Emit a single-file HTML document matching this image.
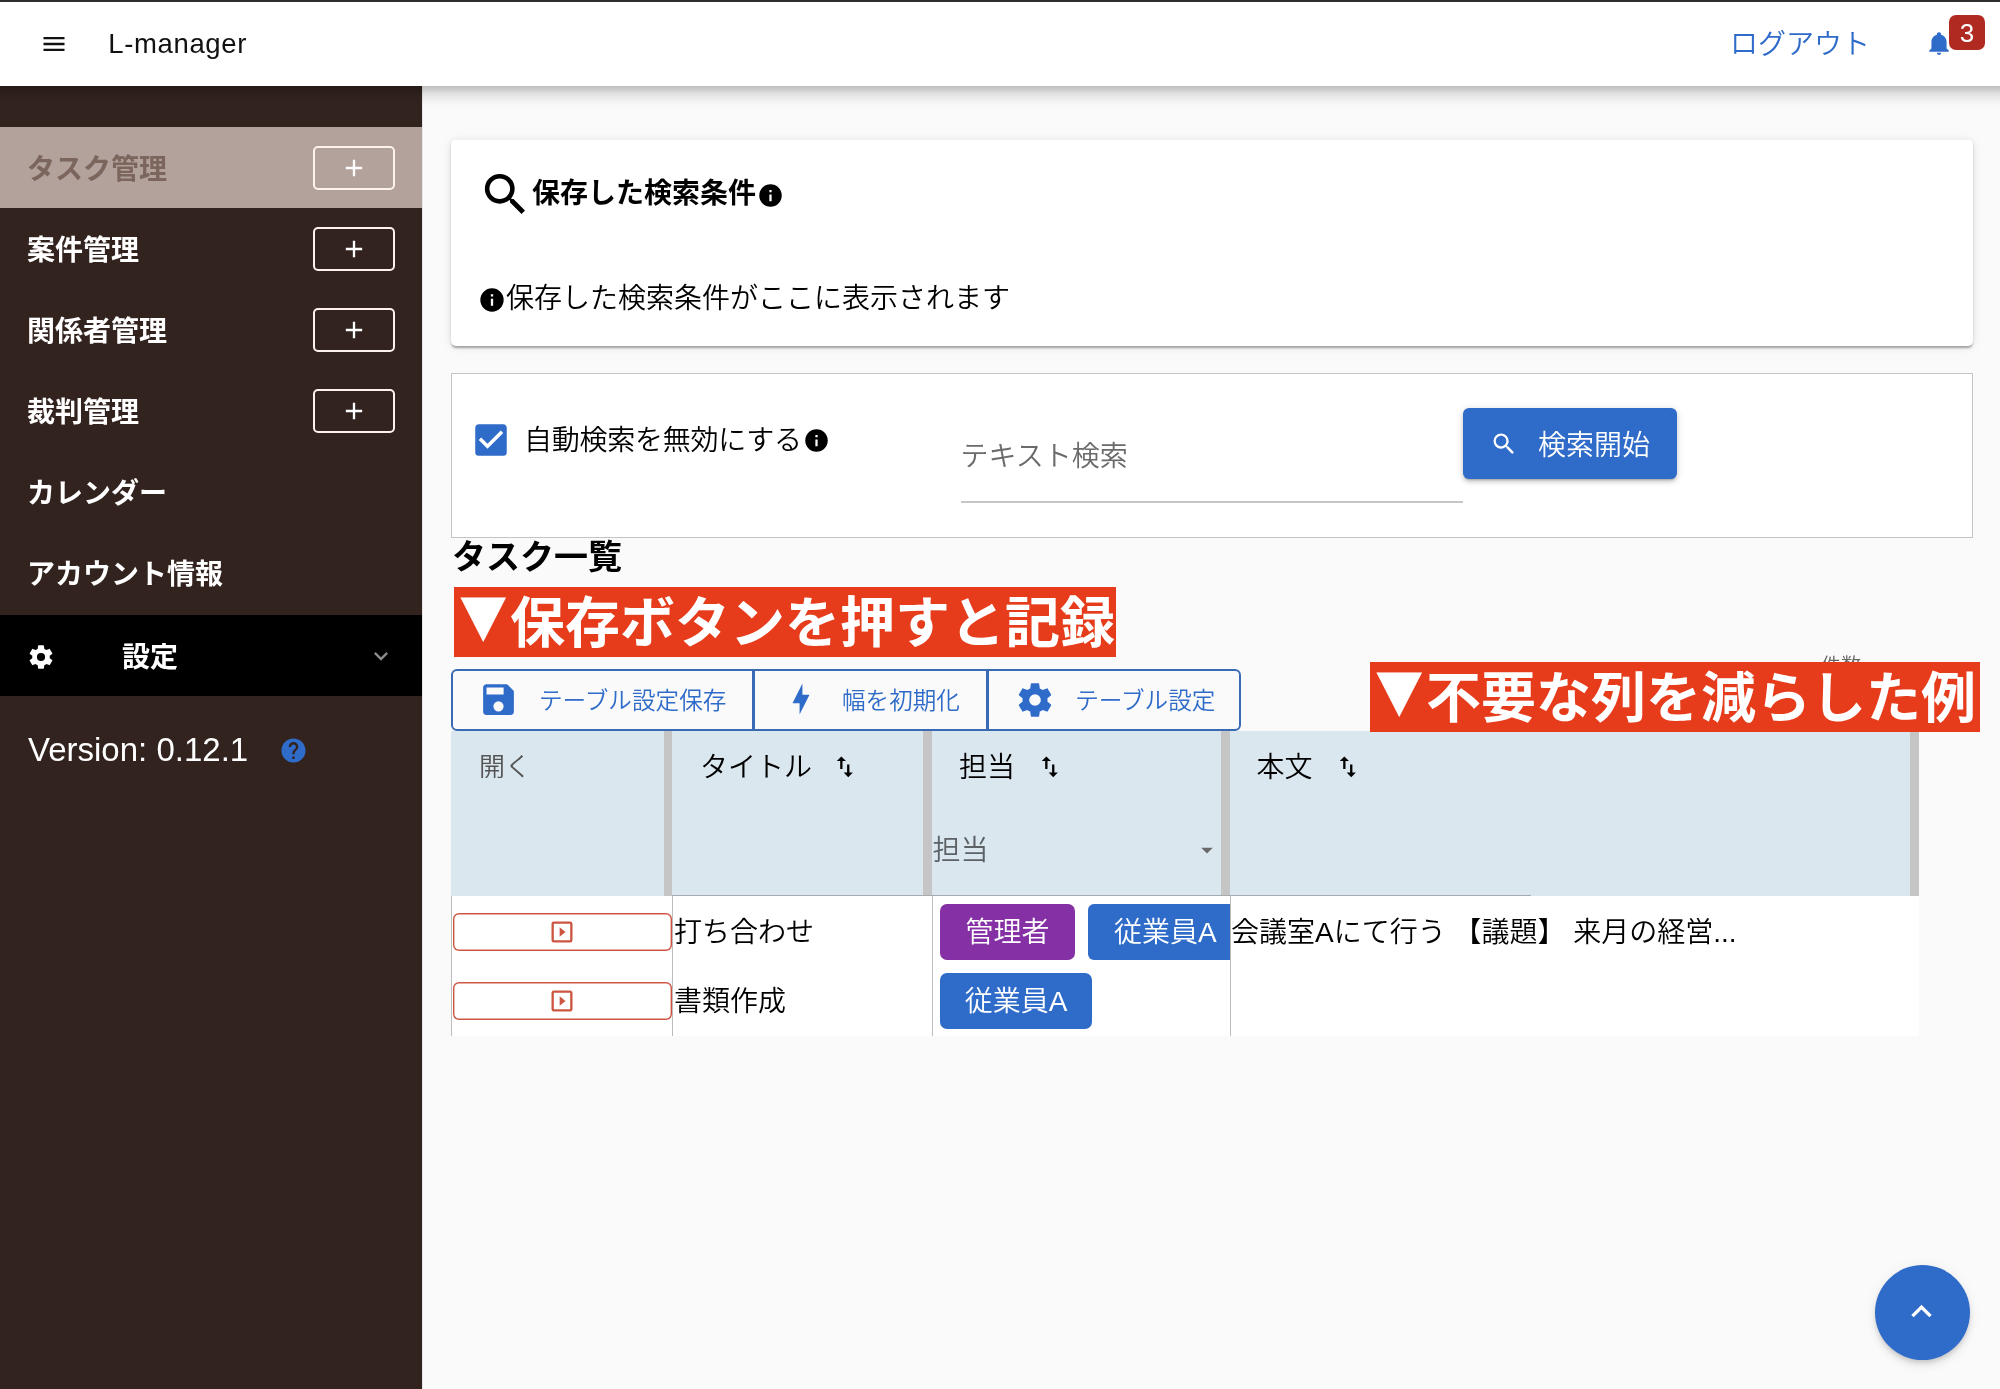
<!DOCTYPE html>
<html lang="ja">
<head>
<meta charset="utf-8">
<title>L-manager</title>
<style>
*{box-sizing:border-box;margin:0;padding:0}
html,body{width:2000px;height:1389px;overflow:hidden}
body{will-change:transform;background:#fafafa;font-family:"Liberation Sans","Noto Sans CJK JP DemiLight","Noto Sans CJK JP",sans-serif;font-size:28px;color:#000;position:relative}
.abs{position:absolute}
.t{position:absolute;white-space:nowrap;line-height:40px;height:40px}
svg{display:block;position:absolute}
/* header */
#topline{left:0;top:0;width:2000px;height:2px;background:#2e2e2e}
#header{left:0;top:1px;width:2000px;height:85px;background:#fff;z-index:5}
#hshadow{left:0;top:86px;width:2000px;height:24px;z-index:5;background:linear-gradient(to bottom,rgba(0,0,0,.24) 0,rgba(0,0,0,.17) 4px,rgba(0,0,0,.096) 8px,rgba(0,0,0,.04) 14px,rgba(0,0,0,.012) 18px,rgba(0,0,0,0) 23px)}
/* sidebar */
#side{left:0;top:86px;width:422px;height:1303px;background:#32231f;z-index:3}
.nav{position:absolute;left:0;width:422px;height:81px;color:#fff;font-weight:700;font-family:"Liberation Sans","Noto Sans CJK JP",sans-serif}
.nav .lbl{position:absolute;left:27px;top:21.5px;line-height:42px;white-space:nowrap;font-size:28px}
.plus{position:absolute;left:313px;top:19px;width:82px;height:44px;border:2px solid #fdf3ec;border-radius:5px}
.plus svg{left:25px;top:6px}
/* cards */
#card1{left:451px;top:140px;width:1522px;height:206px;background:#fff;border-radius:5px;box-shadow:0 3px 2px -1px rgba(0,0,0,.2),0 2px 3px rgba(0,0,0,.14),0 1px 8px rgba(0,0,0,.12)}
#card2{left:451px;top:373px;width:1522px;height:165px;background:#fff;border:1px solid #c4c4c4}

.banner{background:#e63c1b;color:#fff;font-weight:700;font-size:55px;line-height:62.5px;padding-left:56px;white-space:nowrap;overflow:hidden;font-family:"Noto Sans CJK JP",sans-serif}
.gb{top:0;height:62px;border:2px solid #3a6ab4;background:transparent}
.gt{top:10px;color:#2f6bc8;font-size:23.6px}
.bar{top:731px;width:8.5px;height:165px;background:#c5c5c5}
.vline{top:896px;width:1px;height:140px;background:#bdbdbd}
.pbtn{left:453px;width:219px;height:38px;box-shadow:inset 0 0 0 1.4px #cd5641;border-radius:6px;background:#fff}
.chip{height:56px;border-radius:7px;color:#fff;text-align:center;line-height:58px;white-space:nowrap;overflow:hidden}
.tri{position:absolute;left:1.7px;top:-7.6px;width:55px;text-align:center;font-size:48.5px;line-height:70px;transform:scaleY(1.13)}
</style>
</head>
<body>
<div class="abs" id="header">
  <svg style="left:39.75px;top:29.4px" width="28" height="28" viewBox="0 0 24 24"><path fill="#111" d="M3,6H21V8H3V6M3,11H21V13H3V11M3,16H21V18H3V16Z"/></svg>
  <div class="t" id="brand" style="left:108.2px;top:23px;font-size:27.5px;letter-spacing:.65px;color:#111">L-manager</div>
  <div class="t" id="logout" style="left:1730px;top:24px;color:#2f6bc8">ログアウト</div>
  <svg style="left:1925.5px;top:29px" width="26" height="26" viewBox="0 0 24 24"><path fill="#2f6bc8" d="M21,19V20H3V19L5,17V11C5,7.9 7.03,5.17 10,4.29C10,4.19 10,4.1 10,4A2,2 0 0,1 12,2A2,2 0 0,1 14,4C14,4.1 14,4.19 14,4.29C16.97,5.17 19,7.9 19,11V17L21,19M14,21A2,2 0 0,1 12,23A2,2 0 0,1 10,21"/></svg>
  <div class="abs" id="badge" style="left:1949px;top:14px;width:36px;height:35px;background:#b12a22;border-radius:7px;color:#fff;text-align:center;line-height:37px;font-size:26px">3</div>
</div>
<div class="abs" id="topline" style="z-index:6"></div>
<div class="abs" id="hshadow"></div>
<div class="abs" style="left:422px;top:86px;width:1px;height:1303px;background:#e4e6e7;z-index:2"></div>

<div class="abs" id="side">
  <div class="nav" style="top:41px;background:#b2a29b;color:#7b655d"><span class="lbl">タスク管理</span><div class="plus"><svg width="28" height="28" viewBox="0 0 24 24"><path fill="#fff" d="M19,13H13V19H11V13H5V11H11V5H13V11H19V13Z"/></svg></div></div>
  <div class="nav" style="top:122px"><span class="lbl">案件管理</span><div class="plus"><svg width="28" height="28" viewBox="0 0 24 24"><path fill="#fff" d="M19,13H13V19H11V13H5V11H11V5H13V11H19V13Z"/></svg></div></div>
  <div class="nav" style="top:203px"><span class="lbl">関係者管理</span><div class="plus"><svg width="28" height="28" viewBox="0 0 24 24"><path fill="#fff" d="M19,13H13V19H11V13H5V11H11V5H13V11H19V13Z"/></svg></div></div>
  <div class="nav" style="top:284px"><span class="lbl">裁判管理</span><div class="plus"><svg width="28" height="28" viewBox="0 0 24 24"><path fill="#fff" d="M19,13H13V19H11V13H5V11H11V5H13V11H19V13Z"/></svg></div></div>
  <div class="nav" style="top:365px"><span class="lbl">カレンダー</span></div>
  <div class="nav" style="top:446px"><span class="lbl">アカウント情報</span></div>
  <div class="nav" style="top:529px;background:#000"><svg style="left:27px;top:28px" width="28" height="28" viewBox="0 0 24 24"><path fill="#fff" d="M12,15.5A3.5,3.5 0 0,1 8.5,12A3.5,3.5 0 0,1 12,8.5A3.5,3.5 0 0,1 15.5,12A3.5,3.5 0 0,1 12,15.5M19.43,12.97C19.47,12.65 19.5,12.33 19.5,12C19.5,11.67 19.47,11.34 19.43,11L21.54,9.37C21.73,9.22 21.78,8.95 21.66,8.73L19.66,5.27C19.54,5.05 19.27,4.96 19.05,5.05L16.56,6.05C16.04,5.66 15.5,5.32 14.87,5.07L14.5,2.42C14.46,2.18 14.25,2 14,2H10C9.75,2 9.54,2.18 9.5,2.42L9.13,5.07C8.5,5.32 7.96,5.66 7.44,6.05L4.95,5.05C4.73,4.96 4.46,5.05 4.34,5.27L2.34,8.73C2.21,8.95 2.27,9.22 2.46,9.37L4.57,11C4.53,11.34 4.5,11.67 4.5,12C4.5,12.33 4.53,12.65 4.57,12.97L2.46,14.63C2.27,14.78 2.21,15.05 2.34,15.27L4.34,18.73C4.46,18.95 4.73,19.03 4.95,18.95L7.44,17.94C7.96,18.34 8.5,18.68 9.13,18.93L9.5,21.58C9.54,21.82 9.75,22 10,22H14C14.25,22 14.46,21.82 14.5,21.58L14.87,18.93C15.5,18.67 16.04,18.34 16.56,17.94L19.05,18.95C19.27,19.03 19.54,18.95 19.66,18.73L21.66,15.27C21.78,15.05 21.73,14.78 21.54,14.63L19.43,12.97Z"/></svg><span class="lbl" style="left:122px">設定</span><svg style="left:367px;top:27px" width="28" height="28" viewBox="0 0 24 24"><path fill="#8a8a8a" d="M7.41,8.58L12,13.17L16.59,8.58L18,10L12,16L6,10L7.41,8.58Z"/></svg></div>
  <div class="t" id="ver" style="left:28px;top:644px;font-size:33px;color:#fff">Version: 0.12.1</div>
  <svg style="left:278.5px;top:649.5px" width="29" height="29" viewBox="0 0 24 24"><path fill="#2f6bc8" d="M15.07,11.25L14.17,12.17C13.45,12.89 13,13.5 13,15H11V14.5C11,13.39 11.45,12.39 12.17,11.67L13.41,10.41C13.78,10.05 14,9.55 14,9C14,7.89 13.1,7 12,7A2,2 0 0,0 10,9H8A4,4 0 0,1 12,5A4,4 0 0,1 16,9C16,9.88 15.64,10.67 15.07,11.25M13,19H11V17H13M12,2A10,10 0 0,0 2,12A10,10 0 0,0 12,22A10,10 0 0,0 22,12C22,6.47 17.5,2 12,2Z"/></svg>
</div>

<!-- MAIN -->
<div class="abs" id="card1"></div>
<div class="abs" id="card2"></div>

<svg style="left:478px;top:167px" width="55" height="55" viewBox="0 0 24 24"><path fill="#000" d="M9.5,3A6.5,6.5 0 0,1 16,9.5C16,11.11 15.41,12.59 14.44,13.73L14.71,14H15.5L20.5,19L19,20.5L14,15.5V14.71L13.73,14.44C12.59,15.41 11.11,16 9.5,16A6.5,6.5 0 0,1 3,9.5A6.5,6.5 0 0,1 9.5,3M9.5,5C7,5 5,7 5,9.5C5,12 7,14 9.5,14C12,14 14,12 14,9.5C14,7 12,5 9.5,5Z"/></svg>
<div class="t" id="c1title" style="left:532px;top:173.5px;font-weight:700;font-family:'Liberation Sans','Noto Sans CJK JP',sans-serif">保存した検索条件</div>
<svg style="left:756.5px;top:181.5px" width="27" height="27" viewBox="0 0 24 24"><path fill="#000" d="M13,9H11V7H13M13,17H11V11H13M12,2A10,10 0 0,0 2,12A10,10 0 0,0 12,22A10,10 0 0,0 22,12A10,10 0 0,0 12,2Z"/></svg>
<svg style="left:478.0px;top:285.5px" width="28" height="28" viewBox="0 0 24 24"><path fill="#000" d="M13,9H11V7H13M13,17H11V11H13M12,2A10,10 0 0,0 2,12A10,10 0 0,0 12,22A10,10 0 0,0 22,12A10,10 0 0,0 12,2Z"/></svg>
<div class="t" id="c1text" style="left:506px;top:278.5px">保存した検索条件がここに表示されます</div>

<svg style="left:470px;top:418.5px" width="42" height="42" viewBox="0 0 24 24"><path fill="#2f6bc8" d="M10,17L5,12L6.41,10.58L10,14.17L17.59,6.58L19,8M19,3H5C3.89,3 3,3.89 3,5V19A2,2 0 0,0 5,21H19A2,2 0 0,0 21,19V5C21,3.89 20.1,3 19,3Z"/></svg>
<div class="t" id="autolbl" style="left:524px;top:420.5px;letter-spacing:-.25px">自動検索を無効にする</div>
<svg style="left:803.0px;top:426.5px" width="27" height="27" viewBox="0 0 24 24"><path fill="#000" d="M13,9H11V7H13M13,17H11V11H13M12,2A10,10 0 0,0 2,12A10,10 0 0,0 12,22A10,10 0 0,0 22,12A10,10 0 0,0 12,2Z"/></svg>
<div class="t" id="txtsearch" style="left:960.5px;top:436.5px;color:#6b6b6b">テキスト検索</div>
<div class="abs" style="left:961px;top:501px;width:502px;height:2px;background:#c6c6c6"></div>
<div class="abs" id="sbtn" style="left:1463px;top:408px;width:214px;height:71px;background:#2f6bc8;border-radius:6px;box-shadow:0 3px 2px -2px rgba(0,0,0,.2),0 3px 4px rgba(0,0,0,.14),0 1px 8px rgba(0,0,0,.12)">
  <svg style="left:26.5px;top:22px" width="28" height="28" viewBox="0 0 24 24"><path fill="#fff" d="M9.5,3A6.5,6.5 0 0,1 16,9.5C16,11.11 15.41,12.59 14.44,13.73L14.71,14H15.5L20.5,19L19,20.5L14,15.5V14.71L13.73,14.44C12.59,15.41 11.11,16 9.5,16A6.5,6.5 0 0,1 3,9.5A6.5,6.5 0 0,1 9.5,3M9.5,5C7,5 5,7 5,9.5C5,12 7,14 9.5,14C12,14 14,12 14,9.5C14,7 12,5 9.5,5Z"/></svg>
  <div class="t" style="left:75px;top:17.5px;color:#fff">検索開始</div>
</div>

<div class="t" id="tlist" style="left:452px;top:537px;font-size:34px;font-weight:700;font-family:'Liberation Sans','Noto Sans CJK JP',sans-serif">タスク一覧</div>
<div class="abs banner" id="ban1" style="left:454px;top:587px;width:662px;height:70px"><span class="tri">▼</span>保存ボタンを押すと記録</div>

<div class="t" style="left:1821px;top:651px;font-size:20px;color:#666;line-height:30px">件数</div>
<div class="abs banner" id="ban2" style="left:1370px;top:662px;width:610px;height:70px;z-index:2"><span class="tri">▼</span>不要な列を減らした例</div>

<div class="abs" id="btngrp" style="left:451px;top:669px;width:790px;height:62px">
  <div class="abs gb" style="left:0;width:303px;border-radius:6px 0 0 6px">
    <svg style="left:25px;top:8.2px" width="41" height="41" viewBox="0 0 24 24"><path fill="#2f6bc8" d="M15,9H5V5H15M12,19A3,3 0 0,1 9,16A3,3 0 0,1 12,13A3,3 0 0,1 15,16A3,3 0 0,1 12,19M17,3H5C3.89,3 3,3.9 3,5V19A2,2 0 0,0 5,21H19A2,2 0 0,0 21,19V7L17,3Z"/></svg>
    <div class="t gt" style="left:86px">テーブル設定保存</div>
  </div>
  <div class="abs gb" style="left:302px;width:234.5px">
    <svg style="left:28.5px;top:11.4px" width="34" height="34" viewBox="0 0 24 24"><path fill="#2f6bc8" d="M11 15H6L13 1V9H18L11 23V15Z"/></svg>
    <div class="t gt" style="left:87px">幅を初期化</div>
  </div>
  <div class="abs gb" style="left:535.75px;width:254.25px;border-radius:0 6px 6px 0">
    <svg style="left:26px;top:9px" width="40" height="40" viewBox="0 0 24 24"><path fill="#2f6bc8" d="M12,15.5A3.5,3.5 0 0,1 8.5,12A3.5,3.5 0 0,1 12,8.5A3.5,3.5 0 0,1 15.5,12A3.5,3.5 0 0,1 12,15.5M19.43,12.97C19.47,12.65 19.5,12.33 19.5,12C19.5,11.67 19.47,11.34 19.43,11L21.54,9.37C21.73,9.22 21.78,8.95 21.66,8.73L19.66,5.27C19.54,5.05 19.27,4.96 19.05,5.05L16.56,6.05C16.04,5.66 15.5,5.32 14.87,5.07L14.5,2.42C14.46,2.18 14.25,2 14,2H10C9.75,2 9.54,2.18 9.5,2.42L9.13,5.07C8.5,5.32 7.96,5.66 7.44,6.05L4.95,5.05C4.73,4.96 4.46,5.05 4.34,5.27L2.34,8.73C2.21,8.95 2.27,9.22 2.46,9.37L4.57,11C4.53,11.34 4.5,11.67 4.5,12C4.5,12.33 4.53,12.65 4.57,12.97L2.46,14.63C2.27,14.78 2.21,15.05 2.34,15.27L4.34,18.73C4.46,18.95 4.73,19.03 4.95,18.95L7.44,17.94C7.96,18.34 8.5,18.68 9.13,18.93L9.5,21.58C9.54,21.82 9.75,22 10,22H14C14.25,22 14.46,21.82 14.5,21.58L14.87,18.93C15.5,18.67 16.04,18.34 16.56,17.94L19.05,18.95C19.27,19.03 19.54,18.95 19.66,18.73L21.66,15.27C21.78,15.05 21.73,14.78 21.54,14.63L19.43,12.97Z"/></svg>
    <div class="t gt" style="left:86.5px">テーブル設定</div>
  </div>
</div>

<!-- table -->
<div class="abs" id="thead" style="left:451px;top:731px;width:1468px;height:165.5px;background:#dbe7ef"></div>
<div class="abs bar" style="left:663.5px"></div>
<div class="abs bar" style="left:923px"></div>
<div class="abs bar" style="left:1221px;width:9px"></div>
<div class="abs bar" style="left:1910px"></div>
<div class="abs" style="left:672px;top:895px;width:859px;height:1px;background:#a5abaf;z-index:1"></div>
<div class="t" id="h0" style="left:479px;top:747px;font-size:26px;color:#555">開く</div>
<div class="t" id="h1" style="left:700px;top:748px">タイトル</div>
<svg style="left:831.0px;top:752.5px" width="27.6" height="27.6" viewBox="0 0 24 24"><path fill="#000" d="M9,3L5,7H8V14H10V7H13M16,17V10H14V17H11L15,21L19,17H16Z"/></svg>
<div class="t" id="h2" style="left:959px;top:748px">担当</div>
<svg style="left:1035.5px;top:752.5px" width="27.6" height="27.6" viewBox="0 0 24 24"><path fill="#000" d="M9,3L5,7H8V14H10V7H13M16,17V10H14V17H11L15,21L19,17H16Z"/></svg>
<div class="t" id="h3" style="left:1256.5px;top:748px">本文</div>
<svg style="left:1333.5px;top:752.5px" width="27.6" height="27.6" viewBox="0 0 24 24"><path fill="#000" d="M9,3L5,7H8V14H10V7H13M16,17V10H14V17H11L15,21L19,17H16Z"/></svg>
<div class="t" id="f2" style="left:932.5px;top:831px;color:#5c6166">担当</div>
<svg style="left:1193px;top:836px" width="28" height="28" viewBox="0 0 24 24"><path fill="#6a6a6a" d="M7,10L12,15L17,10H7Z"/></svg>

<div class="abs" id="tbody" style="left:451px;top:896px;width:1468px;height:140px;background:#fff"></div>
<div class="abs vline" style="left:451px"></div>
<div class="abs vline" style="left:672px"></div>
<div class="abs vline" style="left:932px"></div>
<div class="abs vline" style="left:1230px"></div>
<div class="abs pbtn" style="top:913px"><svg style="left:95.2px;top:5px" width="28" height="28" viewBox="0 0 24 24"><path fill="#cd5641" d="M19,19H5V5H19M19,3H5A2,2 0 0,0 3,5V19A2,2 0 0,0 5,21H19A2,2 0 0,0 21,19V5C21,3.89 20.1,3 19,3M10,8V16L15,12L10,8Z"/></svg></div>
<div class="abs pbtn" style="top:982px"><svg style="left:95.2px;top:5px" width="28" height="28" viewBox="0 0 24 24"><path fill="#cd5641" d="M19,19H5V5H19M19,3H5A2,2 0 0,0 3,5V19A2,2 0 0,0 5,21H19A2,2 0 0,0 21,19V5C21,3.89 20.1,3 19,3M10,8V16L15,12L10,8Z"/></svg></div>
<div class="t" id="r1t" style="left:674px;top:913px">打ち合わせ</div>
<div class="t" id="r2t" style="left:674px;top:982px">書類作成</div>
<div class="abs chip" style="left:940px;top:904px;width:135px;background:#8531a5">管理者</div>
<div class="abs chip" style="left:1088px;top:904px;width:142px;background:#2f6bc8;border-radius:6px 0 0 6px;text-align:left;padding-left:26px">従業員A</div>
<div class="abs chip" style="left:940px;top:973px;width:152px;background:#2f6bc8">従業員A</div>
<div class="t" id="r1b" style="left:1231px;top:913px">会議室Aにて行う 【議題】 来月の経営...</div>

<div class="abs" id="fab" style="left:1874.5px;top:1265px;width:95px;height:95px;border-radius:50%;background:#2f6bc8;box-shadow:0 3px 5px -1px rgba(0,0,0,.14),0 6px 10px rgba(0,0,0,.08),0 1px 14px rgba(0,0,0,.06)">
  <svg style="left:26.5px;top:26px" width="41" height="41" viewBox="0 0 24 24"><path fill="#fff" d="M7.41,15.41L12,10.83L16.59,15.41L18,14L12,8L6,14L7.41,15.41Z"/></svg>
</div>

</body>
</html>
